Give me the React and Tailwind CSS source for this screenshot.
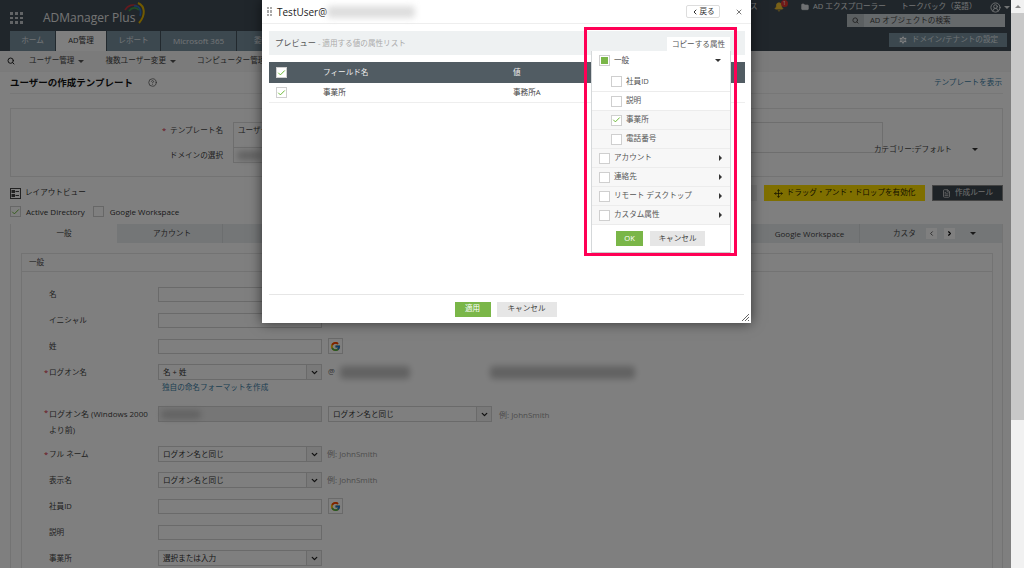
import React from 'react';
import { ChevronDown, ChevronLeft, ChevronRight, Search, HelpCircle, Settings, Folder, Bell, CircleUserRound, Move, FileText, Check, X } from 'lucide-react';
import { FcGoogle } from 'react-icons/fc';

const fontStack = { fontFamily: '"Open Sans", "Noto Sans CJK JP", sans-serif' };

const Box = ({ checked, partial, className = '' }) => (
  <span className={`flex h-[11px] w-[11px] shrink-0 items-center justify-center border border-[#cfcfcf] bg-white ${className}`}>
    {checked && <Check className="h-[10px] w-[10px] text-[#62b32a]" strokeWidth={2.5} />}
    {partial && <span className="h-[7px] w-[7px] bg-[#7ab648]" />}
  </span>
);

const Blur = ({ className = '' }) => <span className={`block rounded-sm bg-[#c4c4c4] blur-[3px] ${className}`} />;

const Input = ({ className = 'w-[164px]', children }) => (
  <div className={`flex h-[15px] items-center border border-[#d4d4d4] bg-white px-[4px] text-[#333] ${className}`}>{children}</div>
);

const Select = ({ value, className = 'w-[164px]' }) => (
  <div className={`flex h-[16px] items-center border border-[#d4d4d4] bg-white pl-[4px] text-[#333] ${className}`}>
    <span className="flex-1 pt-[2px]">{value}</span>
    <span className="flex h-full w-[15px] items-center justify-center border-l border-[#d4d4d4] bg-[#f3f3f3]">
      <ChevronDown className="h-[9px] w-[9px] text-[#222]" strokeWidth={3.5} />
    </span>
  </div>
);

const GoogleBtn = () => (
  <span className="ml-[6px] flex h-[16px] w-[15px] items-center justify-center border border-[#d4d4d4] bg-white">
    <FcGoogle className="h-[11px] w-[11px]" />
  </span>
);

const Row = ({ label, required, children }) => (
  <div className="flex h-[26px] items-center">
    <div className="flex w-[136px] pl-[22px] pt-[2px]">
      <span className="w-[5px] text-[#d0203a]">{required ? '*' : ''}</span>
      <span>{label}</span>
    </div>
    {children}
  </div>
);

const Hint = ({ className = '' }) => <span className={`text-[8px] text-[#9a9a9a] ${className}`}>例: JohnSmith</span>;

const MenuRow = ({ label, arrow, sub, checked, tint, tall }) => (
  <div className={`flex items-center border-b border-[#ececec] text-[#555] ${tall ? 'h-[20px]' : 'h-[19px]'} ${tint ? 'bg-[#f7f7f7]' : 'bg-white'} ${sub ? 'pl-[19px]' : 'pl-[7px]'}`}>
    <Box checked={checked} />
    <span className="ml-[4px] flex-1">{label}</span>
    {arrow && <span className="mr-[8px] h-0 w-0 border-y-[3px] border-l-[3px] border-y-transparent border-l-[#333]" />}
  </div>
);

const navTabs = [
  { label: 'ホーム', w: 'w-[46px]' },
  { label: 'AD管理', w: 'w-[51px]', active: true },
  { label: 'レポート', w: 'w-[54px]' },
  { label: 'Microsoft 365', w: 'w-[76px] text-[8px]' },
  { label: '委任', w: 'w-[50px]' },
];

export default function App() {
  return (
    <div className="relative flex h-[568px] w-[1024px] overflow-hidden bg-white text-[7.6px] leading-none text-[#333]" style={fontStack}>
      {/* page behind the dialog */}
      <div className="h-full w-[1011px] shrink-0 overflow-hidden bg-white">
        <header className="h-[51px] bg-[#414d56] text-[#dfe5e8]">
          <div className="flex h-[31px]">
            <div className="ml-[10px] mt-[12px] grid h-[12px] w-[13px] grid-cols-3 gap-[2px]">
              {Array.from({ length: 9 }).map((_, i) => (
                <span key={i} className="bg-[#c4c9cc]" />
              ))}
            </div>
            <div className="relative ml-[20px] mt-[12px] text-[12px] font-normal text-[#e8e8e8]">
              ADManager Plus
              <svg className="absolute left-[80px] top-[-10px]" width="24" height="24" viewBox="0 0 24 24" fill="none" strokeWidth="1.6">
                <path d="M2 8 C5 3 10 2 14 4" stroke="#c8323c" />
                <path d="M6 9 C9 5 13 5 16 8" stroke="#3f9a4a" />
                <path d="M11 4 C16 3 19 8 17 14" stroke="#2f6fc0" />
                <path d="M15 1 C22 4 23 13 16 21" stroke="#e3b400" strokeWidth="2" />
              </svg>
            </div>
            <div className="relative ml-auto w-[262px] text-[#e4e8ea]">
              <div className="flex h-[14px] items-center">
                <span className="ml-[1px] w-[22px]">ス</span>
                <span className="relative ml-[2px] w-[27px]">
                  <Bell className="h-[10px] w-[10px] fill-[#f2c230] text-[#f2c230]" />
                  <span className="absolute left-[7px] top-[-2px] flex h-[7px] w-[7px] items-center justify-center rounded-full bg-[#e0342f] text-[5px] text-white">1</span>
                </span>
                <Folder className="h-[8px] w-[8px] fill-[#dfe3e6] text-[#dfe3e6]" />
                <span className="ml-[4px] w-[88px]">AD エクスプローラー</span>
                <span className="w-[89px]">トークバック（英語）</span>
                <CircleUserRound className="h-[11px] w-[11px] text-[#e4e8ea]" />
                <span className="ml-[3px] h-0 w-0 border-x-[3px] border-t-[3px] border-x-transparent border-t-[#e4e8ea]" />
              </div>
              <div className="ml-[98px] flex h-[13px] w-[158px] items-center bg-[#cbd2d6] text-[#444]">
                <span className="flex h-full w-[17px] items-center justify-center bg-[#b6bec3]">
                  <Search className="h-[7px] w-[7px]" strokeWidth={3} />
                </span>
                <span className="ml-[6px]">AD オブジェクトの検索</span>
              </div>
            </div>
          </div>
          <div className="flex h-[20px]">
            <div className="ml-[10px] flex">
              {navTabs.map((t) => (
                <div key={t.label} className={`flex items-center justify-center border-r border-[#44525c] ${t.w} ${t.active ? 'bg-white text-[#333]' : 'bg-[#78909f] text-[#e4e9ec]'}`}>
                  {t.label}
                </div>
              ))}
            </div>
            <div className="ml-auto mr-[4px] mt-[2px] flex h-[14px] w-[118px] items-center justify-center bg-[#78909f]">
              <Settings className="mr-[4px] h-[10px] w-[10px] fill-white text-[#78909f]" />
              <span>ドメイン/テナントの設定</span>
            </div>
          </div>
        </header>

        <div className="flex h-[21px] items-center border-b border-[#f4f4f4] bg-[#f6f6f6] text-[#444]">
          <Search className="ml-[7px] h-[8px] w-[8px] text-[#222]" strokeWidth={3} />
          <span className="ml-[14px]">ユーザー管理</span>
          <span className="ml-[4px] h-0 w-0 border-x-[3px] border-t-[3px] border-x-transparent border-t-[#555]" />
          <span className="ml-[21px]">複数ユーザー変更</span>
          <span className="ml-[4px] h-0 w-0 border-x-[3px] border-t-[3px] border-x-transparent border-t-[#555]" />
          <span className="ml-[21px]">コンピューター管理</span>
        </div>

        <div className="ml-[10px] flex h-[22px] w-[993px] items-center border-b border-[#eee]">
          <span className="text-[9.5px] font-bold text-[#111]">ユーザーの作成テンプレート</span>
          <HelpCircle className="ml-[15px] h-[9px] w-[9px] text-[#555]" />
          <span className="ml-auto mr-[1px] text-[#3d7ea6]">テンプレートを表示</span>
        </div>

        <div className="relative ml-[10px] mt-[14px] h-[69px] w-[993px] border border-[#e6e6e6] text-[#444]">
          <div className="mt-[13px] flex h-[16px] w-[212px] items-center justify-end pt-[2px]">
            <span className="mr-[4px] text-[#d0203a]">*</span>
            <span>テンプレート名</span>
          </div>
          <div className="mt-[9px] flex h-[16px] w-[212px] items-center justify-end pt-[2px]">ドメインの選択</div>
          <div className="absolute left-[222px] top-[13px] h-[31px] w-[650px] border border-[#dcdcdc] px-[4px] pt-[4px]">ユーザー</div>
          <div className="absolute left-[222px] top-[38px] flex h-[16px] w-[40px] items-center border border-[#dcdcdc] bg-white pl-[3px]">
            <Blur className="h-[9px] w-[24px]" />
          </div>
          <span className="absolute left-[863px] top-[37px]">カテゴリー:デフォルト</span>
          <span className="absolute left-[961px] top-[39px] h-0 w-0 border-x-[3px] border-t-[3px] border-x-transparent border-t-[#333]" />
        </div>

        <div className="ml-[10px] mt-[8px] flex h-[16px] w-[993px] items-center">
          <svg width="11" height="11" viewBox="0 0 11 11" fill="none" stroke="#444" strokeWidth="1">
            <rect x="0.5" y="0.5" width="10" height="10" />
            <rect x="2" y="2.5" width="2.5" height="2" fill="#444" />
            <rect x="2" y="6.5" width="2.5" height="2" fill="#444" />
            <path d="M5.5 3.5 H9 M5.5 7.5 H9" />
          </svg>
          <span className="ml-[4px]">レイアウトビュー</span>
          <span className="ml-auto h-full w-[22px] bg-[#eee]" />
          <span className="ml-[7px] flex h-full w-[161px] items-center justify-center bg-[#ffdf00] text-[#2a2500]">
            <Move className="mr-[4px] h-[9px] w-[9px]" />
            ドラッグ・アンド・ドロップを有効化
          </span>
          <span className="ml-[7px] flex h-full w-[71px] items-center justify-center border border-[#888] bg-[#3c464e] text-[#e0e0e0]">
            <FileText className="mr-[4px] h-[9px] w-[9px]" />
            作成ルール
          </span>
        </div>

        <div className="ml-[10px] mt-[2px] flex h-[17px] items-center text-[8px]">
          <Box checked />
          <span className="ml-[5px]">Active Directory</span>
          <Box className="ml-[8px]" />
          <span className="ml-[6px]">Google Workspace</span>
        </div>

        <div className="ml-[10px] mt-[4px] h-[400px] w-[993px] border-x border-[#e6e6e6]">
          <div className="flex h-[19px] items-center bg-[#e8ecee] text-[#444]">
            <span className="flex h-full w-[106px] items-center justify-center bg-white">一般</span>
            <span className="flex h-full w-[106px] items-center justify-center border-r border-[#d8dcde] pl-[5px]">アカウント</span>
            <span className="ml-[537px] flex h-full w-[100px] items-center justify-center border-r border-[#d8dcde] text-[8px]">Google Workspace</span>
            <span className="ml-[33px]">カスタ</span>
            <span className="ml-[10px] flex h-[11px] w-[11px] items-center justify-center bg-white">
              <ChevronLeft className="h-[7px] w-[7px]" strokeWidth={3} />
            </span>
            <span className="ml-[7px] flex h-[11px] w-[11px] items-center justify-center bg-white">
              <ChevronRight className="h-[7px] w-[7px] text-black" strokeWidth={4} />
            </span>
            <span className="ml-[15px] h-0 w-0 border-x-[3px] border-t-[3px] border-x-transparent border-t-[#333]" />
          </div>

          <div className="ml-[10px] mt-[10px] h-[400px] w-[972px] border border-[#e6e6e6] text-[#444]">
            <div className="flex h-[18px] items-center border-b border-[#e6e6e6] pl-[7px]">一般</div>
            <div className="pt-[9px]">
              <Row label="名"><Input /></Row>
              <Row label="イニシャル"><Input /></Row>
              <Row label="姓"><Input /><GoogleBtn /></Row>
              <Row label="ログオン名" required>
                <Select value="名 + 姓" />
                <span className="ml-[6px] text-[#666]">@</span>
                <Blur className="ml-[5px] h-[13px] w-[70px]" />
                <Blur className="ml-[80px] h-[13px] w-[145px]" />
              </Row>
              <div className="-mt-[5px] mb-[10px] flex h-[14px] items-center pl-[140px] pt-[2px] text-[#3d7ea6]">独自の命名フォーマットを作成</div>
              <div className="flex h-[37px] items-start">
                <div className="flex w-[136px] pl-[22px] pt-[2px]">
                  <span className="w-[5px] pt-[3px] text-[#d0203a]">*</span>
                  <span className="w-[104px] text-[8px] leading-[16px]">ログオン名 (Windows 2000 より前)</span>
                </div>
                <div className="mt-[2px] flex h-[16px] w-[164px] items-center border border-[#d4d4d4] bg-[#ededed] pl-[2px]">
                  <Blur className="h-[9px] w-[40px]" />
                </div>
                <Select value="ログオン名と同じ" className="ml-[6px] mt-[2px] w-[164px]" />
                <Hint className="ml-[7px] mt-[7px]" />
              </div>
              <Row label="フル ネーム" required><Select value="ログオン名と同じ" /><Hint className="ml-[5px]" /></Row>
              <Row label="表示名"><Select value="ログオン名と同じ" /><Hint className="ml-[5px]" /></Row>
              <Row label="社員ID"><Input /><GoogleBtn /></Row>
              <Row label="説明"><Input /></Row>
              <Row label="事業所"><Select value="選択または入力" /></Row>
            </div>
          </div>
        </div>
      </div>

      {/* scrollbar */}
      <div className="relative z-20 flex h-full w-[13px] shrink-0 flex-col items-center bg-[#f1f1f1]">
        <span className="mt-[5px] h-0 w-0 border-x-[3px] border-b-[3px] border-x-transparent border-b-[#888]" />
        <span className="mt-[5px] h-[407px] w-full bg-[#c8c8c8]" />
      </div>

      {/* dim layer */}
      <div className="absolute left-0 top-0 z-10 h-full w-[1011px] bg-black/50" />

      {/* dialog */}
      <div className="absolute left-[262px] top-0 z-30 flex h-[323px] w-[489px] flex-col bg-white shadow-[0_0_12px_rgba(0,0,0,0.6)]">
        <div className="flex h-[24px] items-center border-b border-[#eee]">
          <div className="ml-[5px] grid h-[9px] w-[5px] grid-cols-2 gap-[1px]">
            {Array.from({ length: 6 }).map((_, i) => (
              <span key={i} className="bg-[#aaa]" />
            ))}
          </div>
          <span className="ml-[5px] text-[10px] text-[#222]">TestUser@</span>
          <Blur className="h-[12px] w-[88px] bg-[#ddd]" />
          <span className="ml-auto flex h-[13px] w-[34px] items-center justify-center rounded-[2px] border border-[#ddd] text-[#333]">
            <ChevronLeft className="h-[8px] w-[8px]" strokeWidth={3} />
            戻る
          </span>
          <X className="ml-[15px] mr-[8px] h-[8px] w-[8px] text-[#333]" strokeWidth={2} />
        </div>

        <div className="ml-[7px] mr-[6px] mt-[7px] flex h-[24px] items-center justify-between bg-[#eef1f2] pl-[6px] pr-[15px]">
          <span className="text-[#555]">
            <span className="text-[8.2px]">プレビュー</span>
            <span className="text-[#aaa]"> - 適用する値の属性リスト</span>
          </span>
          <span className="mb-[1px] mt-[5px] flex h-[16px] w-[63px] items-center justify-center bg-white text-[#555]">コピーする属性</span>
        </div>

        <div className="ml-[7px] mr-[6px] mt-[7px] flex h-[21px] items-center bg-[#515c63] pl-[7px] text-white">
          <Box checked />
          <span className="ml-[36px] w-[190px] text-[#eee]">フィールド名</span>
          <span className="text-[#eee]">値</span>
        </div>
        <div className="ml-[7px] mr-[6px] flex h-[20px] items-center border-b border-[#eee] pl-[7px] text-[#444]">
          <Box checked />
          <span className="ml-[36px] w-[190px]">事業所</span>
          <span>事務所A</span>
        </div>

        <div className="flex-1" />

        <div className="relative mx-[7px] flex h-[29px] items-center justify-center border-t border-[#e6e6e6] pr-[2px]">
          <span className="flex h-[15px] w-[36px] items-center justify-center bg-[#7ab648] text-white">適用</span>
          <span className="ml-[6px] flex h-[15px] w-[60px] items-center justify-center bg-[#e6e6e6] text-[#444]">キャンセル</span>
          <svg className="absolute bottom-[2px] right-[-5px]" width="8" height="8" viewBox="0 0 8 8" stroke="#666" strokeWidth="1">
            <path d="M1 8 L8 1 M4 8 L8 4 M7 8 L8 7" />
          </svg>
        </div>

        {/* attribute dropdown */}
        <div className="absolute left-[329px] top-[51px] w-[140px] border-x border-[#d5d8da] bg-white">
          <div className="flex h-[21px] items-center bg-white pb-[2px] pl-[7px] text-[#444]">
            <Box partial />
            <span className="ml-[4px] flex-1">一般</span>
            <span className="mr-[9px] h-0 w-0 border-x-[3px] border-t-[3px] border-x-transparent border-t-[#333]" />
          </div>
          <MenuRow label="社員ID" sub tall />
          <MenuRow label="説明" sub />
          <MenuRow label="事業所" sub checked tint />
          <MenuRow label="電話番号" sub tint />
          <MenuRow label="アカウント" arrow tint />
          <MenuRow label="連絡先" arrow tint />
          <MenuRow label="リモート デスクトップ" arrow tint />
          <MenuRow label="カスタム属性" arrow tint />
          <div className="flex h-[28px] items-center justify-center border-b border-[#ccc] pr-[1px]">
            <span className="flex h-[15px] w-[27px] items-center justify-center bg-[#7ab648] text-white">OK</span>
            <span className="ml-[7px] flex h-[15px] w-[55px] items-center justify-center bg-[#e6e6e6] text-[#444]">キャンセル</span>
          </div>
        </div>
      </div>

      {/* annotation frame */}
      <div className="absolute left-[584px] top-[27px] z-40 h-[229px] w-[153px] border-[3px] border-[#ff0055]" />
    </div>
  );
}
